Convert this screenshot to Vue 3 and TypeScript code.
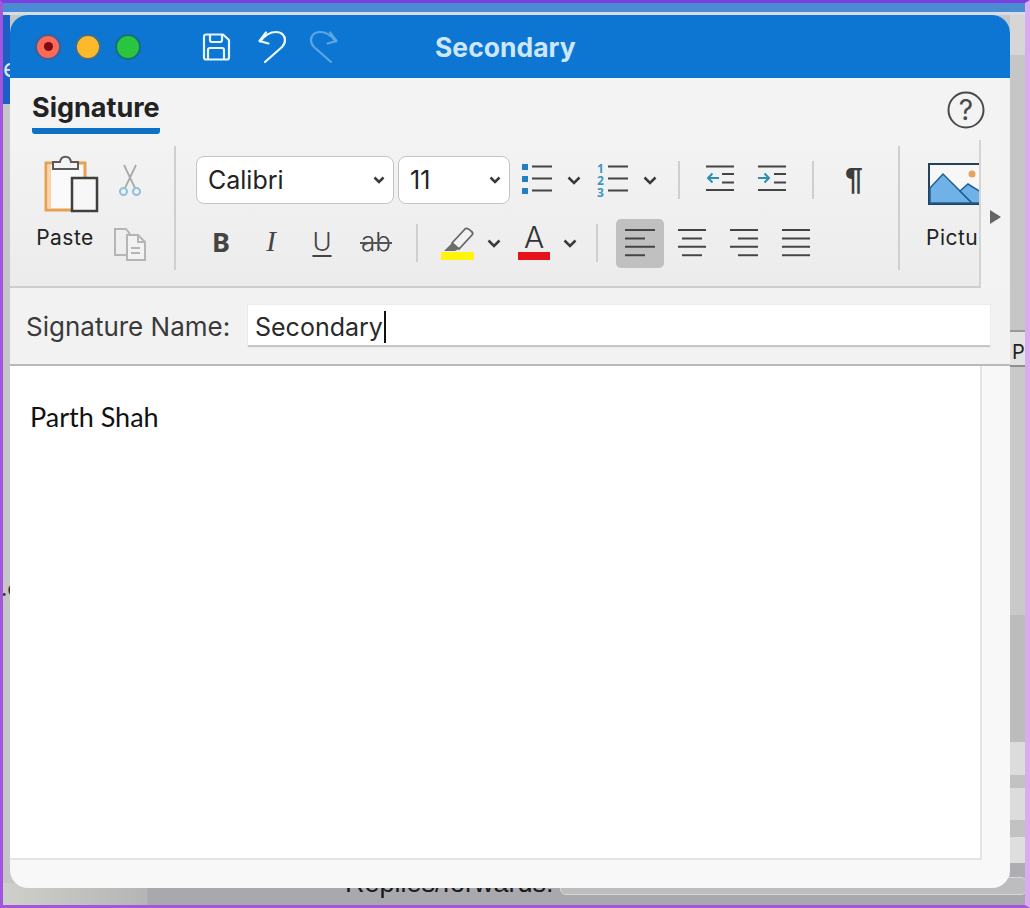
<script setup lang="ts">
// desktop strips left behind the window
const rightBands = [
  { h: 40, c: '#d6d6d6' },
  { h: 275, c: '#c6c6c6' },
  { h: 2, c: '#9a9a9a' },
  { h: 33, c: '#e2e2e2' },
  { h: 2, c: '#8f8f8f' },
  { h: 248, c: '#c9c9c9' },
  { h: 127, c: '#bcbcbc' },
  { h: 33, c: '#dcdcdc' },
  { h: 13, c: '#c2c2c2' },
  { h: 32, c: '#dcdcdc' },
  { h: 17, c: '#c2c2c2' },
  { h: 26, c: '#dedede' },
  { h: 17, c: '#aeaeb2' },
];

// [offset, width] of each stroke in a paragraph-align icon
const aligns = [
  { name: 'left', active: true, width: 48, lines: [[9, 30], [9, 20], [9, 30], [9, 20]] },
  { name: 'center', active: false, width: 56, lines: [[14, 28], [18, 20], [14, 28], [18, 20]] },
  { name: 'right', active: false, width: 48, lines: [[10, 28], [18, 20], [10, 28], [18, 20]] },
  { name: 'justify', active: false, width: 56, lines: [[14, 28], [14, 28], [14, 28], [14, 28]] },
];
</script>

<template>
  <div class="desktop">
    <div class="top-bar"></div>
    <div class="left-tab">e</div>
    <div class="left-crumb">.c</div>
    <div class="right-strip">
      <div v-for="(band, i) in rightBands" :key="i" :style="{ height: band.h + 'px', background: band.c }"></div>
    </div>
    <div class="right-crumb">Pr</div>
    <div class="bottom-left"></div>
    <div class="replies">Replies/forwards:</div>
    <div class="replies-input"></div>

    <div class="window">
      <header class="titlebar">
        <span class="light red"><i></i></span>
        <span class="light yellow"></span>
        <span class="light green"></span>
        <svg class="save" width="30" height="30" viewBox="0 0 30 30" fill="none" stroke="#e6f3fc" stroke-width="2.2" stroke-linejoin="round">
          <path d="M5 2.500h17l6 5.500v17.500a2 2 0 0 1-2 2H5a2 2 0 0 1-2-2v-21a2 2 0 0 1 2-2z" />
          <path d="M9 3v5a2 2 0 0 0 2 2h8a2 2 0 0 0 2-2V3" />
          <path d="M7 27.500V18a2 2 0 0 1 2-2h12a2 2 0 0 1 2 2v9.500" />
        </svg>
        <svg class="undo" width="30" height="34" viewBox="0 0 30 34" fill="none" stroke="#f0f8fe" stroke-width="2.2" stroke-linecap="round" stroke-linejoin="round">
          <path d="M3 11.500C8 5 13 2 19 2c6 0 9 4 9 8 0 3-1 5-3 7L8 32" />
          <path d="M9 2.500 2.500 11l9 2.500" />
        </svg>
        <svg class="redo" width="30" height="34" viewBox="0 0 30 34" fill="none" stroke="#5ea6e3" stroke-width="2.2" stroke-linecap="round" stroke-linejoin="round">
          <path d="M27 11.500C22 5 17 2 11 2 5 2 2 6 2 10c0 3 1 5 3 7l17 15" />
          <path d="M21 2.500 27.500 11l-9 2.500" />
        </svg>
        <div class="title">Secondary</div>
      </header>

      <div class="tabs">
        <div class="tab">Signature</div>
        <svg class="help" width="38" height="38" viewBox="0 0 38 38" fill="none">
          <circle cx="19" cy="19" r="17.500" stroke="#4a4a4a" stroke-width="2" />
          <text x="19" y="29" text-anchor="middle" class="help-mark">?</text>
        </svg>
      </div>

      <div class="ribbon-wrap">
        <div class="ribbon">
          <section class="paste-group">
            <div class="paste">
              <svg width="60" height="64" viewBox="0 0 60 64" fill="none">
                <rect x="5" y="12" width="39" height="47" fill="#fafafa" stroke="#e8a052" stroke-width="3" />
                <path d="M8.500 14v43" stroke="#f8d5a8" stroke-width="3" />
                <path d="M12 18V11h7c1-7 10-7 11 0h7v7z" fill="#f4f4f4" stroke="#5a5a5a" stroke-width="2" />
                <rect x="31" y="27" width="25" height="33" fill="#f7f7f7" stroke="#3f3f3f" stroke-width="2.500" />
              </svg>
              <span>Paste</span>
            </div>
            <div class="clip-tools">
              <svg width="26" height="34" viewBox="0 0 26 34" fill="none">
                <path d="M7 1l11 23M19 1 8 24" stroke="#a9a9a9" stroke-width="1.800" />
                <circle cx="6.500" cy="27.500" r="3.500" stroke="#8fc0dc" stroke-width="2" />
                <circle cx="19.500" cy="27.500" r="3.500" stroke="#8fc0dc" stroke-width="2" />
              </svg>
              <svg width="34" height="34" viewBox="0 0 34 34" fill="none" stroke="#b5b5b5" stroke-width="2">
                <path d="M13 28H2V2h11l4 5" />
                <path d="M14 8h11l7 7v18H14z" fill="#f2f2f2" />
                <path d="M25 8v7h7M18 21h9M18 26h9" />
              </svg>
            </div>
          </section>
          <div class="divider tall"></div>

          <section class="format-group">
            <div class="row first">
              <div class="select font-name">Calibri
                <svg class="chev" width="12" height="8" viewBox="0 0 12 8"><path d="M1.500 1.500 6 6l4.500-4.500" /></svg>
              </div>
              <div class="select font-size">11
                <svg class="chev" width="12" height="8" viewBox="0 0 12 8"><path d="M1.500 1.500 6 6l4.500-4.500" /></svg>
              </div>
              <div class="tool" style="width: 48px">
                <svg width="32" height="32" viewBox="0 0 32 32">
                  <path d="M1 0h6v6H1zM1 12h6v6H1zM1 24h6v6H1z" fill="#2180bd" />
                  <path d="M11 2.500h20M11 14.500h20M11 26.500h20" stroke="#444" stroke-width="2" />
                </svg>
              </div>
              <div class="tool" style="width: 26px">
                <svg class="chev" width="14" height="9" viewBox="0 0 14 9"><path d="M1.500 1.500 7 7l5.500-5.500" /></svg>
              </div>
              <div class="tool" style="width: 52px">
                <svg width="32" height="36" viewBox="0 0 32 36">
                  <text x="0" y="11" class="num">1</text>
                  <text x="0" y="23" class="num">2</text>
                  <text x="0" y="35" class="num">3</text>
                  <path d="M11 4.500h20M11 16.500h20M11 28.500h20" stroke="#444" stroke-width="2" />
                </svg>
              </div>
              <div class="tool" style="width: 22px">
                <svg class="chev" width="14" height="9" viewBox="0 0 14 9"><path d="M1.500 1.500 7 7l5.500-5.500" /></svg>
              </div>
              <div class="tool" style="width: 36px"><div class="divider"></div></div>
              <div class="tool" style="width: 46px">
                <svg class="lift" width="28" height="26" viewBox="0 0 28 26" fill="none">
                  <path d="M0 1.500h28M16 9h12M16 17.500h12M0 25h28" stroke="#444" stroke-width="2" />
                  <path d="M13 13H2M6.500 8.500 2 13l4.500 4.500" stroke="#2a8fb0" stroke-width="2" />
                </svg>
              </div>
              <div class="tool" style="width: 58px">
                <svg class="lift" width="28" height="26" viewBox="0 0 28 26" fill="none">
                  <path d="M0 1.500h28M16 9h12M16 17.500h12M0 25h28" stroke="#444" stroke-width="2" />
                  <path d="M0 13h11M6.500 8.500 11 13l-4.500 4.500" stroke="#2a8fb0" stroke-width="2" />
                </svg>
              </div>
              <div class="tool" style="width: 24px"><div class="divider"></div></div>
              <div class="tool pilcrow" style="width: 58px">¶</div>
            </div>

            <div class="row second">
              <div class="tool glyph bold" style="width: 50px">B</div>
              <div class="tool glyph italic" style="width: 50px">I</div>
              <div class="tool glyph under" style="width: 52px">U</div>
              <div class="tool glyph strike" style="width: 56px">ab</div>
              <div class="tool" style="width: 26px"><div class="divider"></div></div>
              <div class="tool" style="width: 56px">
                <svg width="34" height="34" viewBox="0 0 34 34" fill="none">
                  <path d="M11 17 24 3c2-2 5 1 7 3 1 1 1 2 0 3L18 23z" fill="#f2f2f2" stroke="#666" stroke-width="1.800" />
                  <path d="M11 17l7 6-4 2H3z" fill="#6d6d6d" />
                  <rect x="0" y="26" width="33" height="8" fill="#fdf50b" />
                </svg>
              </div>
              <div class="tool" style="width: 16px">
                <svg class="chev" width="14" height="9" viewBox="0 0 14 9"><path d="M1.500 1.500 7 7l5.500-5.500" /></svg>
              </div>
              <div class="tool font-color" style="width: 56px">
                <span>A</span>
                <i></i>
              </div>
              <div class="tool" style="width: 16px">
                <svg class="chev" width="14" height="9" viewBox="0 0 14 9"><path d="M1.500 1.500 7 7l5.500-5.500" /></svg>
              </div>
              <div class="tool" style="width: 38px"><div class="divider"></div></div>
              <div
                v-for="a in aligns"
                :key="a.name"
                class="tool align"
                :class="{ active: a.active }"
                :style="{ width: a.width + 'px' }"
              >
                <svg :width="a.width" height="30" :viewBox="`0 0 ${a.width} 30`">
                  <path
                    v-for="(l, i) in a.lines"
                    :key="i"
                    :d="`M${l[0]} ${2 + i * 8.400}h${l[1]}`"
                    stroke="#444"
                    stroke-width="2"
                  />
                </svg>
              </div>
            </div>
          </section>
          <div class="divider tall"></div>

          <section class="picture-group">
            <svg width="70" height="42" viewBox="0 0 70 42">
              <rect x="1" y="1" width="68" height="40" fill="#f7f7f7" stroke="#24425e" stroke-width="2" />
              <path d="M2 25 15 11l29 29H2z" fill="#70b2e8" stroke="#1d5f94" stroke-width="1.500" />
              <path d="M32 28l8-7 30 19H44z" fill="#70b2e8" stroke="#1d5f94" stroke-width="1.500" />
              <circle cx="44" cy="11" r="3.500" fill="#e9a25c" />
            </svg>
            <span>Picture</span>
          </section>
        </div>
        <div class="more"><i></i></div>
      </div>

      <div class="name-row">
        <label>Signature Name:</label>
        <div class="name-input">Secondary<span class="caret"></span></div>
      </div>

      <div class="editor-wrap">
        <div class="editor">Parth Shah</div>
      </div>
    </div>
  </div>
</template>

<style scoped>
.desktop {
  position: relative;
  width: 1030px;
  height: 908px;
  overflow: hidden;
  background: #c6c6c6;
  border: solid #a455df;
  border-width: 3px 5px 3px 3px;
  border-right-color: #dcaaf0;
  border-top-color: #7b3fe0;
  box-sizing: border-box;
  font-family: Inter, "Liberation Sans", sans-serif;
}

/* everything below is positioned against the padding box (3px inset) */
.top-bar {
  position: absolute;
  left: 0;
  right: 0;
  top: 0;
  height: 9px;
  background: #4a8bd2;
  border-bottom: 3px solid #d5dde6;
}

.left-tab {
  position: absolute;
  left: 0;
  top: 12px;
  width: 7px;
  height: 89px;
  background: #1b5fc4;
  color: #dbe9f8;
  font-size: 25px;
  line-height: 106px;
  overflow: hidden;
}

.left-crumb {
  position: absolute;
  left: -2px;
  top: 572px;
  font-size: 22px;
  color: #333;
}

.right-strip {
  position: absolute;
  left: 1007px;
  top: 12px;
  width: 15px;
  display: flex;
  flex-direction: column;
}

.right-crumb {
  position: absolute;
  left: 1009px;
  top: 335px;
  font-size: 20px;
  line-height: 28px;
  color: #222;
}

.bottom-left {
  position: absolute;
  left: 0;
  top: 880px;
  width: 1022px;
  height: 22px;
  background: linear-gradient(90deg, #cfcfca 0, #b5b5b5 144px, #a9a9ad 145px);
}

.replies {
  position: absolute;
  left: 342px;
  top: 865px;
  font-family: "Liberation Sans", sans-serif;
  font-size: 27px;
  line-height: 30px;
  color: #1a1a1a;
}

.replies-input {
  position: absolute;
  left: 557px;
  top: 874px;
  width: 465px;
  height: 16px;
  background: #bdbdbf;
  border: 1px solid #d8d8d8;
  border-radius: 6px;
}

.window {
  position: absolute;
  left: 7px;
  top: 12px;
  width: 1000px;
  height: 873px;
  display: flex;
  flex-direction: column;
  border-radius: 18px;
  overflow: hidden;
  background: #f8f8f8;
}

.titlebar {
  flex: none;
  height: 63px;
  display: flex;
  align-items: center;
  padding-left: 25px;
  background: #0c76d2;
  box-sizing: border-box;
}

.light {
  flex: none;
  width: 26px;
  height: 26px;
  border-radius: 50%;
  border: 2px solid;
  box-sizing: border-box;
  margin-right: 14px;
  display: flex;
  align-items: center;
  justify-content: center;
}

.light.red { background: #fd6a58; border-color: #3f5f97; }
.light.red i { width: 9px; height: 9px; border-radius: 50%; background: #7c0b12; }
.light.yellow { background: #fdb92c; border-color: #3d6f95; }
.light.green { background: #2ac43f; border-color: #126f83; }

.save { margin-left: 46px; }
.undo { margin-left: 26px; }
.redo { margin-left: 22px; }

.title {
  margin-left: 96px;
  font-size: 26.5px;
  font-weight: 700;
  color: #cde6fa;
}

.tabs {
  flex: none;
  height: 62px;
  display: flex;
  justify-content: space-between;
  align-items: flex-start;
  padding: 15px 25px 0 22px;
  background: #f3f3f3;
  box-sizing: border-box;
}

.help {
  margin-top: -2px;
}

.tab {
  font-size: 27px;
  font-weight: 700;
  line-height: 30px;
  height: 41px;
  width: 128px;
  box-sizing: border-box;
  color: #222;
  border-bottom: 6px solid #0c70c4;
  border-radius: 0 0 3px 3px;
}

.help-mark {
  font-family: Inter, sans-serif;
  font-size: 28px;
  fill: #4a4a4a;
}

.ribbon-wrap {
  flex: none;
  height: 148px;
  display: flex;
  background: #f3f3f3;
}

.ribbon {
  width: 971px;
  height: 148px;
  display: flex;
  align-items: flex-start;
  padding-top: 6px;
  box-sizing: border-box;
  background: linear-gradient(#f3f3f3, #ececec);
  border-right: 2px solid #d4d4d4;
  border-bottom: 2px solid #cdcdcd;
  overflow: hidden;
}

.more {
  flex: 1;
  display: flex;
  align-items: center;
  justify-content: center;
  padding-top: 6px;
  box-sizing: border-box;
}

.more i {
  width: 0;
  height: 0;
  border-left: 11px solid #666;
  border-top: 7px solid transparent;
  border-bottom: 7px solid transparent;
}

.divider {
  width: 2px;
  height: 38px;
  background: #cfcfcf;
}

.divider.tall {
  flex: none;
  height: 124px;
}

.paste-group {
  flex: none;
  width: 164px;
  height: 124px;
  display: flex;
}

.paste {
  flex: none;
  width: 110px;
  margin-right: -10px;
  padding-top: 5px;
  display: flex;
  flex-direction: column;
  align-items: center;
  font-size: 21px;
  line-height: 26px;
  color: #222;
  letter-spacing: 0.5px;
  gap: 10px;
}

.paste svg {
  margin-right: -11px;
}

.clip-tools {
  display: flex;
  flex-direction: column;
  align-items: center;
  width: 40px;
  padding-top: 18px;
  gap: 29px;
}

.format-group {
  flex: none;
  width: 722px;
  padding-left: 20px;
  padding-top: 10px;
  box-sizing: border-box;
}

.row {
  display: flex;
  align-items: center;
}

.row.first {
  height: 48px;
}

.row.second {
  margin-top: 14px;
  height: 50px;
}

.select {
  flex: none;
  height: 48px;
  box-sizing: border-box;
  display: flex;
  align-items: center;
  justify-content: space-between;
  padding: 0 8px 0 11px;
  background: #fff;
  border: 1px solid #c4c4c4;
  border-radius: 8px;
  font-size: 25px;
  color: #222;
}

.font-name {
  width: 198px;
  margin-right: 4px;
}

.font-size {
  width: 112px;
  margin-right: 3px;
}

.chev {
  fill: none;
  stroke: #3a3a3a;
  stroke-width: 2.500;
}

.tool {
  flex: none;
  height: 100%;
  display: flex;
  align-items: center;
  justify-content: center;
}

.lift {
  margin-top: -4px;
}

.pilcrow {
  font-family: "Liberation Sans", sans-serif;
  font-size: 32px;
  font-weight: 700;
  color: #3d3d3d;
  padding-bottom: 2px;
  box-sizing: border-box;
}

.num {
  font-family: "Noto Sans", sans-serif;
  font-size: 12px;
  font-weight: 700;
  fill: #3a97c4;
}

.glyph {
  color: #444;
  font-size: 26px;
  font-family: Inter, sans-serif;
  font-weight: 300;
  padding-bottom: 3px;
  box-sizing: border-box;
}

.glyph.bold { font-family: "Noto Sans", sans-serif; font-weight: 700; font-size: 27px; }
.glyph.italic { font-family: "Liberation Serif", serif; font-style: italic; font-weight: 400; font-size: 29px; }
.under { text-decoration: underline; text-underline-offset: 4px; text-decoration-thickness: 2px; }

.strike {
  position: relative;
}

.strike::after {
  content: "";
  position: absolute;
  left: 12px;
  width: 32px;
  top: 24px;
  height: 2px;
  background: #555;
}

.font-color {
  flex-direction: column;
  margin-left: 4px;
  font-family: Inter, sans-serif;
  font-weight: 300;
  font-size: 30px;
  line-height: 30px;
  color: #333;
}

.font-color span {
  margin-top: -4px;
}

.font-color i {
  width: 32px;
  height: 8px;
  background: #e8101a;
}

.align.active {
  background: #c0c0c0;
  border-radius: 5px;
  height: 49px;
}

.picture-group {
  flex: none;
  display: flex;
  flex-direction: column;
  padding: 17px 0 0 28px;
  font-size: 21px;
  letter-spacing: 0.5px;
  color: #222;
  gap: 20px;
  white-space: nowrap;
}

.picture-group span {
  margin-left: -2px;
}

.name-row {
  flex: none;
  height: 78px;
  display: flex;
  align-items: center;
  gap: 18px;
  padding: 0 20px 0 16px;
  background: #f2f2f2;
  border-bottom: 2px solid #b9b9b9;
  box-sizing: border-box;
  font-size: 26px;
  color: #3a3a3a;
}

.name-row label {
  width: 204px;
  white-space: nowrap;
}

.name-input {
  flex: none;
  width: 742px;
  height: 42px;
  margin-right: -20px;
  display: flex;
  align-items: center;
  padding: 3px 0 0 7px;
  box-sizing: border-box;
  background: #fff;
  border-bottom: 2px solid #c6c6c6;
  box-shadow: 0 0 0 1px #ececec;
  font-size: 25px;
  color: #2a2a2a;
}

.caret {
  width: 2px;
  height: 32px;
  background: #111;
  margin-left: 1px;
}

.editor-wrap {
  flex: none;
  height: 494px;
  padding-right: 28px;
  box-sizing: border-box;
  background: #f8f8f8;
}

.editor {
  height: 100%;
  padding: 33px 0 0 20px;
  box-sizing: border-box;
  background: #fff;
  border-right: 2px solid #e4e4e4;
  border-bottom: 2px solid #e4e4e4;
  font-family: Lato, "Open Sans", sans-serif;
  font-size: 27px;
  line-height: 36px;
  color: #111;
}
</style>
